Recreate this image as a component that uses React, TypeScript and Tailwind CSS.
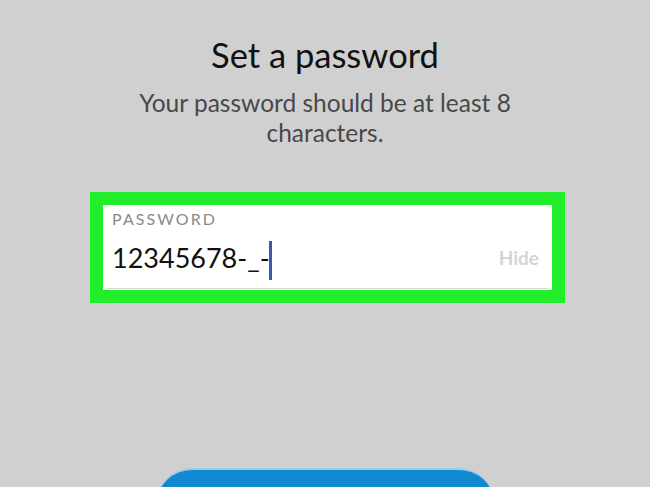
export default function App() {
  return (
    <div
      className="w-[650px] h-[487px] overflow-hidden bg-[#d0d0d0] flex flex-col items-center"
      style={{ fontFamily: "Lato, 'Noto Sans', sans-serif" }}
    >
      <h1 className="mt-[34px] text-[34.5px] leading-[42px] text-[#111]">Set a password</h1>
      <p className="mt-[12px] w-[420px] text-center text-[24.5px] leading-[30px] text-[#484848]">
        Your password should be at least 8 characters.
      </p>

      <div className="mt-[44px] ml-[5px] w-[475px] h-[111px] shrink-0 bg-[#20ee2a] p-[13px]">
        <div className="h-full bg-white flex flex-col px-[4px] pt-[4px]">
          <div className="px-[5px] text-[16px] leading-[20px] tracking-[0.13em] text-[#8a8a8a]">PASSWORD</div>
          <div className="flex items-center mt-[9px] h-[40px] px-[5px]">
            <span className="text-[27px] leading-[32px] text-[#111]">12345678-_-</span>
            <span className="w-[3px] h-[39px] bg-[#3a58b0] translate-y-[2px] -ml-[1px]" />
            <span className="ml-auto mr-[4px] text-[19px] font-bold text-[#d4d4d4]">Hide</span>
          </div>
          <div className="mt-[10px] h-[1px] bg-[#d8d8d8]" />
        </div>
      </div>

      <button className="mt-[165px] w-[337px] h-[70px] shrink-0 rounded-[35px] bg-[#1089d0] border-t-[2px] border-[#9ccbe8]" />
    </div>
  );
}
